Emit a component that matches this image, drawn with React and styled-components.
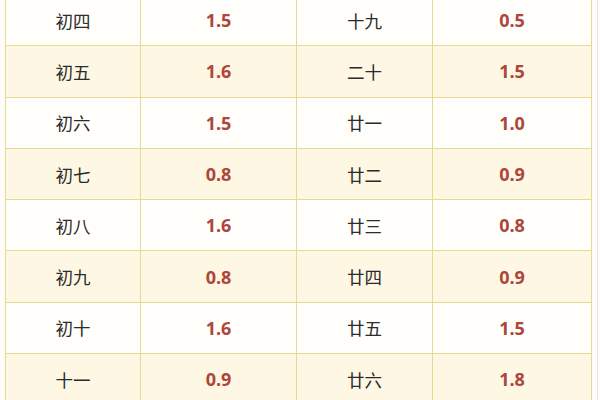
import React from 'react';
import styled, { createGlobalStyle } from 'styled-components';

const rows = [
  ['初四', '1.5', '十九', '0.5'],
  ['初五', '1.6', '二十', '1.5'],
  ['初六', '1.5', '廿一', '1.0'],
  ['初七', '0.8', '廿二', '0.9'],
  ['初八', '1.6', '廿三', '0.8'],
  ['初九', '0.8', '廿四', '0.9'],
  ['初十', '1.6', '廿五', '1.5'],
  ['十一', '0.9', '廿六', '1.8'],
];

const App = () => {
  return (
    <Page>
      <GlobalStyle />
      <Grid>
        {rows.map((row, i) =>
          row.map((cell, j) => (
            <Cell key={`${i}-${j}`} $alt={i % 2 === 1} $num={j % 2 === 1}>
              {cell}
            </Cell>
          ))
        )}
      </Grid>
      <Edge />
    </Page>
  );
};

export default App;

const GlobalStyle = createGlobalStyle`
  html, body {
    margin: 0;
    padding: 0;
    background: #fff;
    overflow: hidden;
  }
`;

const Page = styled.div`
  width: 600px;
  height: 400px;
  overflow: hidden;
  display: flex;
  align-items: flex-start;
  padding-left: 5px;
  box-sizing: border-box;
  background: #fdfcfb;
`;

const Grid = styled.div`
  margin-top: -6px;
  display: grid;
  grid-template-columns: 134px 155px 135px 158px;
  grid-auto-rows: 50.3px;
  gap: 1px;
  padding: 1px;
  background: #e6da92;
`;

const Cell = styled.div`
  display: flex;
  align-items: center;
  justify-content: center;
  background: ${props => (props.$alt ? '#fdf7e3' : '#fffefb')};
  font-family: ${props =>
    props.$num
      ? '"Open Sans", "Noto Sans", sans-serif'
      : '"Noto Sans CJK SC", sans-serif'};
  font-size: ${props => (props.$num ? '18px' : '17.5px')};
  font-weight: ${props => (props.$num ? 700 : 400)};
  color: ${props => (props.$num ? '#ad463c' : '#2b2b2b')};
`;

const Edge = styled.div`
  margin-left: 5px;
  width: 1px;
  height: 400px;
  background: #e4e2e8;
`;
